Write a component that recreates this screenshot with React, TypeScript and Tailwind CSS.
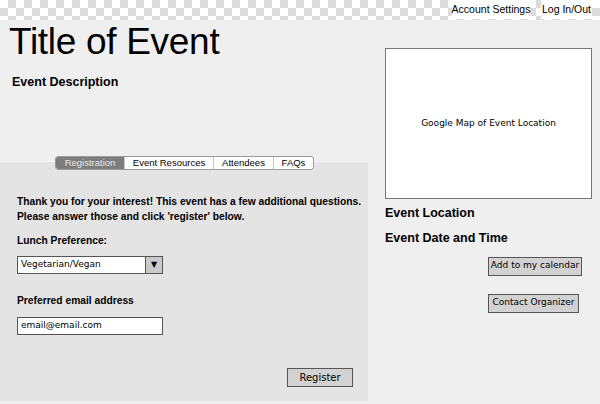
const hand = { fontFamily: '"Comic Sans MS", "DejaVu Sans", sans-serif' };

function Checker() {
  return (
    <div
      className="h-[20px] w-full"
      style={{
        backgroundColor: "#ffffff",
        backgroundImage:
          "linear-gradient(45deg, #dcdcdc 25%, transparent 25%, transparent 75%, #dcdcdc 75%), linear-gradient(45deg, #dcdcdc 25%, transparent 25%, transparent 75%, #dcdcdc 75%)",
        backgroundSize: "16px 16px",
        backgroundPosition: "0 0, 8px 8px",
      }}
    />
  );
}

const tabs = [
  { label: "Registration", w: "w-[68px]" },
  { label: "Event Resources", w: "w-[89px]" },
  { label: "Attendees", w: "w-[60px]" },
  { label: "FAQs", w: "w-[40px]" },
];

export default function App() {
  return (
    <div className="relative w-[600px] h-[404px] overflow-hidden bg-[#efefef] font-['Liberation_Sans',Arial,sans-serif] text-black">
      <Checker />

      {/* top links */}
      <div className="absolute top-0 right-[8px] flex gap-[11px] text-[10.5px] whitespace-nowrap">
        <div className="bg-white h-[19px] w-[78px] px-[3px] flex items-center justify-center">Account Settings</div>
        <div className="bg-white h-[19px] w-[51px] flex items-center justify-center">Log In/Out</div>
      </div>

      <div className="flex">
        {/* left column */}
        <div className="w-[368px] flex flex-col">
          <h1 className="text-[37px] leading-[40px] ml-[9px] mt-[2px] tracking-[-0.3px]">Title of Event</h1>
          <div className="ml-[12px] mt-[11px] text-[12.5px] font-bold">Event Description</div>

          <div className="relative mt-[69px] bg-[#e4e4e4] h-[240px] border-t border-[#f4f4f4]">
            {/* tabs */}
            <div className="absolute -top-[6px] left-[55px] flex h-[14px] text-[9.5px] leading-[12px] border border-[#9a9a9a] rounded-[3px] overflow-hidden bg-white whitespace-nowrap">
              {tabs.map((t, i) => (
                <div
                  key={t.label}
                  className={
                    i === 0
                      ? `${t.w} text-center bg-[#7d7d7d] text-[#e8e8e8]`
                      : `${t.w} text-center border-l border-[#c8c8c8]`
                  }
                >
                  {t.label}
                </div>
              ))}
            </div>

            <div className="ml-[17px] pt-[32px] text-[10.25px] font-bold leading-[15px] whitespace-nowrap">
              <p>Thank you for your interest! This event has a few additional questions.</p>
              <p>Please answer those and click 'register' below.</p>
              <p className="mt-[9px]">Lunch Preference:</p>

              <div className="mt-[8px] w-[146px] h-[18px] flex border border-[#555] bg-white font-normal text-[9px]" style={hand}>
                <div className="flex-1 flex items-center px-[3px]">Vegetarian/Vegan</div>
                <div className="w-[17px] bg-[#c9c9c9] border-l border-[#555] flex items-center justify-center text-[8px]">▼</div>
              </div>

              <p className="mt-[19px]">Preferred email address</p>
              <div className="mt-[9px] w-[146px] h-[18px] flex items-center px-[3px] border border-[#555] bg-white font-normal text-[9px]" style={hand}>
                email@email.com
              </div>
            </div>

            <div className="flex justify-end pr-[15px] mt-[33px]">
              <div className="w-[66px] h-[19px] bg-[#d2d2d2] border border-[#555] flex items-center justify-center text-[10px]" style={hand}>
                Register
              </div>
            </div>
          </div>
        </div>

        {/* right column */}
        <div className="flex-1 pl-[17px] pt-[28px]">
          <div className="w-[207px] h-[151px] bg-white border border-[#777] flex items-center justify-center text-[9px]" style={hand}>
            Google Map of Event Location
          </div>
          <div className="mt-[5px] text-[12.5px] font-bold">Event Location</div>
          <div className="mt-[6px] text-[12.5px] font-bold">Event Date and Time</div>
          <div className="flex flex-col items-end pr-[18px] gap-[18px] mt-[9px]">
            <div className="w-[94px] h-[19px] bg-[#d2d2d2] border border-[#555] flex items-center justify-center text-[9px] whitespace-nowrap" style={hand}>
              Add to my calendar
            </div>
            <div className="w-[91px] h-[19px] bg-[#d2d2d2] border border-[#555] flex items-center justify-center text-[9px] mr-[3px] whitespace-nowrap" style={hand}>
              Contact Organizer
            </div>
          </div>
        </div>
      </div>
    </div>
  );
}
